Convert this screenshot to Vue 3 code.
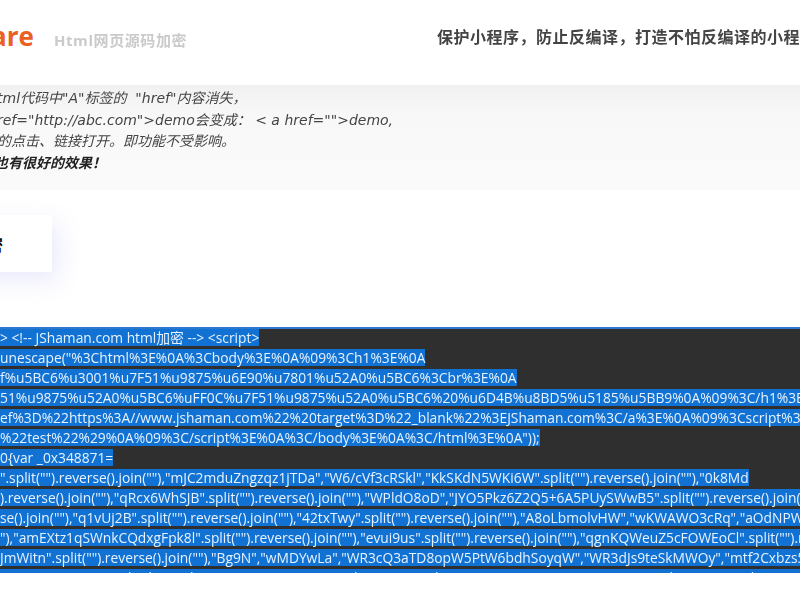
<script setup>
const descLines = [
  { text: 'tml代码中"A"标签的  "href"内容消失，', strong: false },
  { text: 'ref="http://abc.com">demo会变成： < a href="">demo,', strong: false },
  { text: '的点击、链接打开。即功能不受影响。', strong: false },
  { text: '也有很好的效果！', strong: true },
]
const codeLines = [
  '> <!-- JShaman.com html加密 --> <script>',
  'unescape("%3Chtml%3E%0A%3Cbody%3E%0A%09%3Ch1%3E%0A',
  'f%u5BC6%u3001%u7F51%u9875%u6E90%u7801%u52A0%u5BC6%3Cbr%3E%0A',
  '51%u9875%u52A0%u5BC6%uFF0C%u7F51%u9875%u52A0%u5BC6%20%u6D4B%u8BD5%u5185%u5BB9%0A%09%3C/h1%3E%0A%09%3Ca',
  'ef%3D%22https%3A//www.jshaman.com%22%20target%3D%22_blank%22%3EJShaman.com%3C/a%3E%0A%09%3Cscript%3E%0A',
  '%22test%22%29%0A%09%3C/script%3E%0A%3C/body%3E%0A%3C/html%3E%0A"));',
  '0{var _0x348871=',
  '".split("").reverse().join(""),"mJC2mduZngzqz1jTDa","W6/cVf3cRSkl","KkSKdN5WKi6W".split("").reverse().join(""),"0k8Md',
  ').reverse().join(""),"qRcx6WhSJB".split("").reverse().join(""),"WPldO8oD","JYO5Pkz6Z2Q5+6A5PUySWwB5".split("").reverse().join("")',
  'se().join(""),"q1vUj2B".split("").reverse().join(""),"42txTwy".split("").reverse().join(""),"A8oLbmolvHW","wKWAWO3cRq","aOdNPWA7cq"',
  '"),"amEXtz1qSWnkCQdxgFpk8l".split("").reverse().join(""),"evui9us".split("").reverse().join(""),"qgnKQWeuZ5cFOWEoCl".split("").reverse()',
  'JmWitn".split("").reverse().join(""),"Bg9N","wMDYwLa","WR3cQ3aTD8opW5PtW6bdhSoyqW","WR3dJs9teSkMWOy","mtf2Cxbzs5TuW"',
  '"WOxcKmoE","W5ZdPCkD".split("").reverse().join(""),"mtbZs8oW","xSk3WQ","WOxcKmoEWOxcKmoE","mtbZs8oW","xSk3WQ","W5ZdPCkD","WOxcKmoE","mtbZs8oW"',
]
</script>

<template>
  <div class="page">
    <header class="header">
      <div class="brand">
        <span class="logo">are</span>
        <span class="subtitle">Html网页源码加密</span>
      </div>
      <div class="slogan">保护小程序，防止反编译，打造不怕反编译的小程序</div>
    </header>

    <section class="desc">
      <p v-for="line in descLines" :key="line.text" :class="{ strong: line.strong }">{{ line.text }}</p>
    </section>

    <section class="middle">
      <div class="card">代码加密</div>
    </section>

    <pre class="code"><div v-for="line in codeLines" :key="line" class="code-line"><span>{{ line }}</span></div></pre>

    <div class="tail"></div>
  </div>
</template>

<style>
html, body { margin: 0; background: #fff; }
</style>

<style scoped>
.page {
  width: 800px;
  height: 600px;
  overflow: hidden;
  display: flex;
  flex-direction: column;
  background: #fff;
  font-family: "Open Sans", "Noto Sans CJK SC", sans-serif;
}
.header {
  flex: 0 0 85px;
  display: flex;
  align-items: center;
  justify-content: space-between;
  padding-bottom: 14px;
  box-sizing: border-box;
  white-space: nowrap;
  overflow: hidden;
}
.brand {
  display: flex;
  align-items: baseline;
  gap: 20px;
  margin-left: -9px;
}
.logo {
  font-size: 26px;
  font-weight: 700;
  color: #ea5f24;
  line-height: 32px;
}
.subtitle {
  font-size: 15px;
  font-weight: 700;
  letter-spacing: 0.6px;
  color: #cacaca;
  filter: blur(0.5px);
}
.slogan {
  flex: 0 0 363px;
  overflow: hidden;
  font-size: 16px;
  font-weight: 700;
  letter-spacing: 0.5px;
  color: #444;
  filter: blur(0.3px);
}
.desc {
  flex: 0 0 105px;
  box-sizing: border-box;
  padding-top: 3px;
  background: linear-gradient(#f1f1f1, #f8f8f8 30%, #fafafa);
  font-family: "DejaVu Sans", "Noto Sans CJK SC", sans-serif;
  font-size: 14px;
  line-height: 21.7px;
  font-style: italic;
  color: #444;
  white-space: pre;
}
.desc p { margin: 0 0 0 -3px; filter: blur(0.3px); }
.desc .strong { margin-left: -6px; font-weight: 700; color: #222; }
.middle {
  flex: 0 0 137px;
  box-sizing: border-box;
  padding-top: 25px;
}
.card {
  width: 92px;
  height: 57px;
  margin-left: -40px;
  box-sizing: border-box;
  padding-right: 49px;
  display: flex;
  align-items: center;
  justify-content: flex-end;
  white-space: nowrap;
  background: #fff;
  box-shadow: 6px 8px 24px rgba(120, 120, 230, 0.16);
  font-size: 16px;
  font-weight: 700;
  color: #111;
}
.code {
  flex: 0 0 246px;
  margin: 0;
  overflow: hidden;
  background: #2f2f2f;
  border-top: 2px solid #2b78cc;
  box-sizing: border-box;
  font-family: "Open Sans", "Noto Sans CJK SC", sans-serif;
  font-size: 13.8px;
  line-height: 20px;
  white-space: pre;
}
.code-line {
  height: 20px;
}
.code-line span {
  display: inline-block;
  height: 17px;
  line-height: 17px;
  vertical-align: top;
  background: #1272d3;
  color: #e6f2ff;
  filter: blur(0.3px);
}
.tail { flex: 1; background: #fff; }
</style>
